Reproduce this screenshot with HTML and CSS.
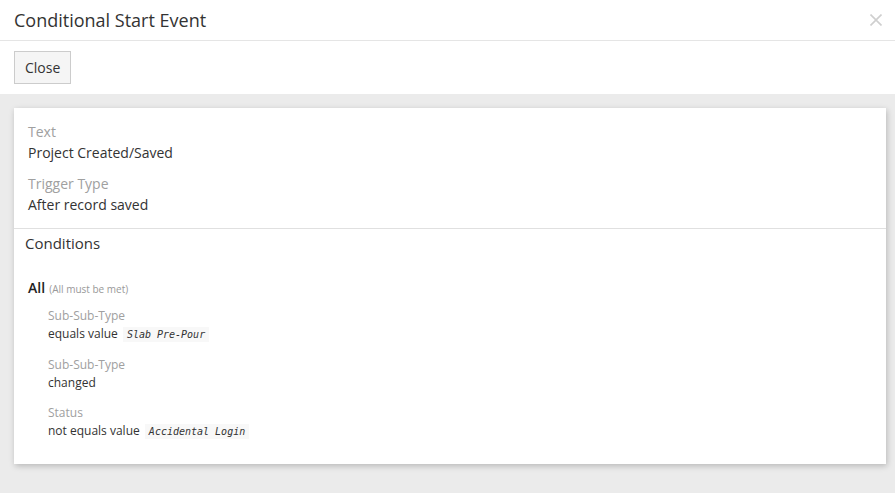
FILE: index.html
```html
<!DOCTYPE html>
<html>
<head>
<meta charset="utf-8">
<link rel="stylesheet" href="styles.css">
</head>
<body>
<div class="modal">
  <div class="header">
    <h1 class="title">Conditional Start Event</h1>
    <button class="x" aria-label="Close">
      <svg width="12" height="12" viewBox="0 0 12 12"><path d="M0.5 0.5L11.5 11.5M11.5 0.5L0.5 11.5" stroke="#cfcfcf" stroke-width="1.6" fill="none"/></svg>
    </button>
  </div>
  <div class="toolbar">
    <button class="btn">Close</button>
  </div>
  <div class="body">
    <div class="card">
      <div class="fields">
        <div class="field">
          <div class="label">Text</div>
          <div class="value">Project Created/Saved</div>
        </div>
        <div class="field">
          <div class="label">Trigger Type</div>
          <div class="value">After record saved</div>
        </div>
      </div>
      <div class="conditions">
        <div class="cond-title">Conditions</div>
        <div class="group">
          <div class="group-head"><span class="all">All</span> <span class="hint">(All must be met)</span></div>
          <div class="items">
            <div class="item">
              <div class="ilabel">Sub-Sub-Type</div>
              <div class="ivalue">equals value <code class="code">Slab Pre-Pour</code></div>
            </div>
            <div class="item">
              <div class="ilabel">Sub-Sub-Type</div>
              <div class="ivalue">changed</div>
            </div>
            <div class="item">
              <div class="ilabel">Status</div>
              <div class="ivalue">not equals value <code class="code">Accidental Login</code></div>
            </div>
          </div>
        </div>
      </div>
    </div>
  </div>
</div>
</body>
</html>
```
FILE: styles.css
```css
html, body {
  margin: 0;
  padding: 0;
  height: 100%;
}
body {
  font-family: "Open Sans", "Noto Sans", sans-serif;
  color: #333;
  background: #ebebeb;
}
.modal {
  display: flex;
  flex-direction: column;
  min-height: 100%;
}
.header {
  height: 40px;
  padding: 0 13px 0 14px;
  display: flex;
  align-items: center;
  justify-content: space-between;
  border-bottom: 1px solid #e5e5e5;
  background: #fff;
}
.title {
  margin: 0;
  font-size: 18px;
  font-weight: 400;
  color: #333;
  line-height: 24px;
}
.x {
  border: 0;
  background: none;
  padding: 0;
  width: 12px;
  height: 12px;
  display: flex;
  cursor: pointer;
}
.toolbar {
  background: #fff;
  padding: 10px 14px;
}
.btn {
  font-family: "Open Sans", "Noto Sans", sans-serif;
  font-size: 14px;
  line-height: 19px;
  color: #333;
  background: #f5f5f5;
  border: 1px solid #cccccc;
  padding: 6px 10px;
  border-radius: 0;
}
.body {
  flex: 1;
  padding: 14px 9px 29px 14px;
}
.card {
  background: #fff;
  box-shadow: 1px 2px 6px rgba(0, 0, 0, 0.22);
}
.fields {
  padding: 13px 14px 13px 14px;
  border-bottom: 1px solid #e0e0e0;
}
.field + .field {
  margin-top: 10px;
}
.label {
  font-size: 14px;
  line-height: 21px;
  color: #a0a0a0;
}
.value {
  font-size: 14px;
  line-height: 21px;
  color: #333;
}
.conditions {
  padding: 3px 14px 23px 11px;
}
.cond-title {
  font-size: 15px;
  line-height: 22px;
  color: #333;
}
.group {
  margin-top: 23px;
  padding-left: 3px;
}
.group-head {
  line-height: 20px;
}
.all {
  font-size: 14px;
  font-weight: 600;
  color: #222;
}
.hint {
  font-size: 10px;
  color: #999;
}
.items {
  padding-left: 20px;
  margin-top: 7px;
}
.item + .item {
  margin-top: 11px;
}
.ilabel {
  font-size: 12px;
  line-height: 19px;
  color: #a0a0a0;
}
.ivalue {
  font-size: 12px;
  line-height: 18px;
  color: #333;
}
.code {
  font-family: "DejaVu Sans Mono", "Liberation Mono", monospace;
  font-style: italic;
  font-size: 10px;
  background: #f8f8f8;
  color: #333;
  padding: 2px 4px;
  margin-left: 2px;
}
```
